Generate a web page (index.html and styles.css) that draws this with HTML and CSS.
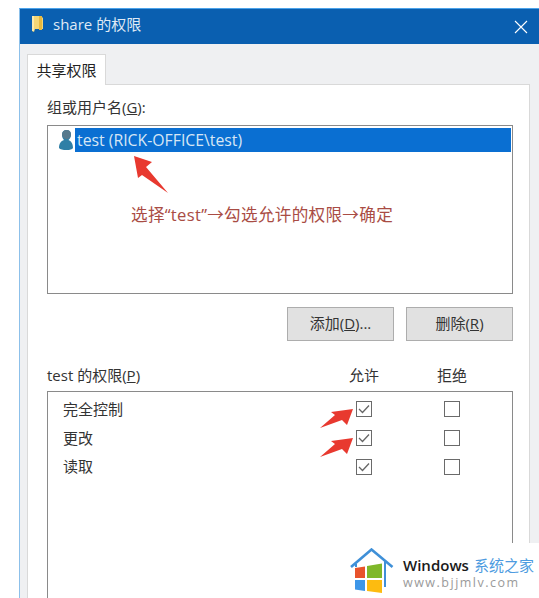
FILE: index.html
```html
<!DOCTYPE html>
<html lang="zh-CN">
<head>
<meta charset="utf-8">
<title>share 的权限</title>
<link rel="stylesheet" href="styles.css">
</head>
<body>
<div class="window">
  <header class="titlebar">
    <svg class="folder" viewBox="0 0 14 18" width="14" height="18"><path d="M1 1h9l2 2v11H4l-1 3-2-1z" fill="#f4d676"/><path d="M8 1h3v14H8z" fill="#e8b93f"/><path d="M1 1h2v15H1z" fill="#fbe9ac"/></svg>
    <span class="title">share 的权限</span>
    <svg class="close" viewBox="0 0 14 14" width="14" height="14"><path d="M1 1l12 12M13 1L1 13" stroke="#fff" stroke-width="1.1" fill="none"/></svg>
  </header>
  <div class="body">
    <div class="tabs"><div class="tab">共享权限</div></div>
    <div class="panel">
      <div class="label">组或用户名(<u>G</u>):</div>
      <div class="listbox">
        <div class="user-row">
          <svg class="user-icon" viewBox="0 0 16 22" width="16" height="22"><path d="M8.500 1c3 0 4.500 2 4.500 4.500S12 10 10.500 11c2.500 1 4.500 3.500 4.500 8-1 1.500-3 2-6.500 2S2 20.500 1 19c0-4.500 2-7 5-8C4.500 9.500 4 7.500 4 5.500 4 3 5.500 1 8.500 1z" fill="#2f7fa6"/><path d="M8.500 1c3 0 4.500 2 4.500 4.500S11 10 8.500 10 4 7.500 4 5.500 5.500 1 8.500 1z" fill="#56798c"/></svg>
          <span class="user-name">test (RICK-OFFICE\test)</span>
        </div>
        <div class="note">选择“test”→勾选允许的权限→确定</div>
        <svg class="arrow arrow-up" viewBox="0 0 34 37" width="34" height="37"><path d="M0 0L18 6 12 11 34 37 8 19 4 22z" fill="#e8392f"/></svg>
      </div>
      <div class="buttons">
        <button class="btn">添加(<u>D</u>)...</button>
        <button class="btn">删除(<u>R</u>)</button>
      </div>
      <div class="perm-head">
        <span class="perm-title">test 的权限(<u>P</u>)</span>
        <span class="col">允许</span>
        <span class="col">拒绝</span>
      </div>
      <div class="permbox">
        <div class="perm-row">
          <span class="perm-name">完全控制</span>
          <span class="cell"><span class="check on"><svg viewBox="0 0 16 16" width="16" height="16"><path d="M3 8l3.500 3.500L13 4.500" stroke="#666" stroke-width="1.300" fill="none"/></svg></span></span>
          <span class="cell"><span class="check"></span></span>
          <svg class="arrow arrow-side" viewBox="0 0 34 20" width="34" height="20"><path d="M33 0L27 16 22 11 0 19 15 6 11 3z" fill="#e8392f"/></svg>
        </div>
        <div class="perm-row">
          <span class="perm-name">更改</span>
          <span class="cell"><span class="check on"><svg viewBox="0 0 16 16" width="16" height="16"><path d="M3 8l3.500 3.500L13 4.500" stroke="#666" stroke-width="1.300" fill="none"/></svg></span></span>
          <span class="cell"><span class="check"></span></span>
          <svg class="arrow arrow-side" viewBox="0 0 34 20" width="34" height="20"><path d="M33 0L27 16 22 11 0 19 15 6 11 3z" fill="#e8392f"/></svg>
        </div>
        <div class="perm-row">
          <span class="perm-name">读取</span>
          <span class="cell"><span class="check on"><svg viewBox="0 0 16 16" width="16" height="16"><path d="M3 8l3.500 3.500L13 4.500" stroke="#666" stroke-width="1.300" fill="none"/></svg></span></span>
          <span class="cell"><span class="check"></span></span>
        </div>
      </div>
    </div>
  </div>
</div>
<div class="watermark">
  <svg class="wm-logo" viewBox="0 0 46 48" width="46" height="48">
    <path d="M1 19L21.500 1.500 42.500 19" fill="none" stroke="#3f90d8" stroke-width="2.600"/>
    <path d="M6 16v3M35 13v26" fill="none" stroke="#3f90d8" stroke-width="2"/>
    <path d="M5 20l10-1.500V30H5z" fill="#e8532b"/>
    <path d="M17 18l15-2.500V30H17z" fill="#7fb82a"/>
    <path d="M5 32h10v11l-10-1.500z" fill="#3d96e8"/>
    <path d="M17 32h15v13l-15-2z" fill="#fdbb10"/>
  </svg>
  <div class="wm-text">
    <div class="wm-line"><span class="wm-brand">Windows</span> <span class="wm-cn">系统之家</span></div>
    <div class="wm-url">www.bjjmlv.com</div>
  </div>
</div>
</body>
</html>
```
FILE: styles.css
```css
* { box-sizing: border-box; }
html, body { margin: 0; height: 100%; }
body {
  background: #fff;
  overflow: hidden;
  font-family: "Open Sans", "Noto Sans CJK SC", sans-serif;
  font-size: 15px;
  color: #333;
  position: relative;
}
.window {
  margin: 8px 0 0 19px;
  height: 590px;
  border-top: 1px solid #4ba3ea;
  border-left: 1px solid #8cc0ea;
  display: flex;
  flex-direction: column;
}
.titlebar {
  height: 35px;
  flex: none;
  background: #0a5fb0;
  color: #dfe9f5;
  display: flex;
  align-items: center;
  padding: 0 11px 6px 11px;
}
.folder { margin-right: 8px; }
.title { flex: 1; font-size: 15px; }
.close { margin-top: 6px; }
.body {
  flex: 1;
  min-height: 0;
  background: #eff0f2;
  padding: 10px 9px 0 7px;
  display: flex;
  flex-direction: column;
}
.tabs { display: flex; height: 31px; flex: none; margin-bottom: -1px; position: relative; z-index: 1; }
.tab {
  width: 79px;
  background: #fff;
  border: 1px solid #d9d9d9;
  border-bottom: 0;
  text-align: center;
  line-height: 30px;
  color: #222;
}
.panel {
  flex: 1;
  min-height: 0;
  background: #fff;
  border: 1px solid #d9d9d9;
  border-bottom: 0;
  padding: 12px 16px 0 19px;
  display: flex;
  flex-direction: column;
}
.label { height: 28px; line-height: 20px; }
.listbox {
  position: relative;
  height: 169px;
  flex: none;
  border: 1px solid #8a8a8a;
  padding: 2px 1px;
}
.user-row { display: flex; align-items: center; height: 24px; padding-left: 9px; }
.user-icon { flex: none; margin-right: 1px; }
.user-name {
  flex: 1;
  background: #0a6fd2;
  color: #d6e6f5;
  height: 24px;
  line-height: 25px;
  padding-left: 2px;
  font-size: 15.800px;
}
.note {
  position: absolute;
  left: 83px;
  top: 76px;
  color: #a94c44;
  font-size: 16.600px;
  letter-spacing: 0.300px;
  white-space: nowrap;
}
.arrow { position: absolute; }
.arrow-up { left: 86px; top: 30px; }
.buttons { display: flex; justify-content: flex-end; gap: 12px; margin-top: 13px; flex: none; }
.btn {
  width: 107px;
  height: 34px;
  background: #e1e1e1;
  border: 1px solid #adadad;
  font: inherit;
  color: #333;
  padding: 0 0 3px;
}
.perm-head {
  display: flex;
  align-items: center;
  height: 50px;
  padding-top: 17px;
  flex: none;
}
.perm-title { flex: 1; }
.col { width: 88px; text-align: center; }
.perm-head .col:first-of-type { width: 91px; padding-right: 4px; }
.perm-head .col:last-child { margin-right: 17px; }
.permbox {
  flex: 1;
  min-height: 0;
  border: 1px solid #8a8a8a;
  border-bottom: 0;
  padding: 4px 16px 0 15px;
}
.perm-row { display: flex; align-items: center; height: 28.700px; position: relative; }
.perm-name { flex: 1; line-height: 27px; height: 28.700px; }
.cell { width: 88px; display: flex; justify-content: center; padding-bottom: 2px; }
.check {
  width: 16px;
  height: 16px;
  border: 1px solid #6a6a6a;
  display: block;
  position: relative;
}
.check svg { position: absolute; left: -1px; top: -1px; }
.arrow-side { left: 257px; top: 13px; }
.watermark {
  position: absolute;
  left: 350px;
  top: 543px;
  width: 189px;
  height: 55px;
  background: #fff;
  display: flex;
  gap: 7px;
  padding-top: 5px;
}
.wm-logo { flex: none; }
.wm-text { padding-top: 7px; }
.wm-line { display: flex; align-items: baseline; gap: 5px; line-height: 20px; white-space: nowrap; }
.wm-brand { font-family: "Open Sans", sans-serif; font-size: 15px; font-weight: 600; color: #1a1a1a; }
.wm-cn { font-size: 15px; color: #4d9be0; }
.wm-url { font-family: "Open Sans", sans-serif; font-size: 12.500px; letter-spacing: 1.500px; color: #9a9a9a; line-height: 15px; }
```
